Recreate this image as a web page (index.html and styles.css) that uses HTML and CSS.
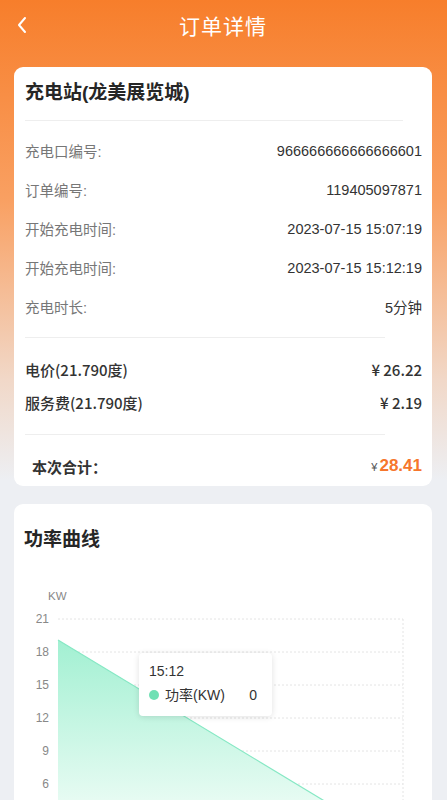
FILE: index.html
```html
<!DOCTYPE html>
<html lang="zh-CN">
<head>
    <meta charset="UTF-8">
    <meta name="viewport" content="width=device-width, initial-scale=1.0">
    <title>订单详情</title>
    <link rel="stylesheet" href="styles.css">
</head>
<body>
    <div class="page">
        <header class="nav-bar">
            <span class="back">
                <svg width="12" height="18" viewBox="0 0 12 18"><path d="M9 2 L3 9 L9 16" fill="none" stroke="#fff" stroke-width="2" stroke-linecap="round" stroke-linejoin="round"/></svg>
            </span>
            <h1 class="nav-title">订单详情</h1>
        </header>

        <section class="card order-card">
            <h2 class="card-title">充电站(龙美展览城)</h2>
            <div class="divider"></div>
            <div class="info-list">
                <div class="info-row"><span class="label">充电口编号:</span><span class="value">966666666666666601</span></div>
                <div class="info-row"><span class="label">订单编号:</span><span class="value">119405097871</span></div>
                <div class="info-row"><span class="label">开始充电时间:</span><span class="value">2023-07-15 15:07:19</span></div>
                <div class="info-row"><span class="label">开始充电时间:</span><span class="value">2023-07-15 15:12:19</span></div>
                <div class="info-row"><span class="label">充电时长:</span><span class="value">5分钟</span></div>
            </div>
            <div class="divider short"></div>
            <div class="price-list">
                <div class="price-row"><span>电价(21.790度)</span><span>¥ 26.22</span></div>
                <div class="price-row"><span>服务费(21.790度)</span><span>¥ 2.19</span></div>
            </div>
            <div class="divider short"></div>
            <div class="total-row">
                <span class="total-label">本次合计：</span>
                <span class="total-value"><small>¥</small>28.41</span>
            </div>
        </section>

        <section class="card chart-card">
            <h2 class="card-title">功率曲线</h2>
            <div class="chart">
                <svg class="chart-svg" width="418" height="230" viewBox="0 0 418 230">
                    <defs>
                        <linearGradient id="area-fill" x1="0" y1="0" x2="0" y2="1">
                            <stop offset="0" stop-color="#a2f0d2"/>
                            <stop offset="1" stop-color="#ecfcf5"/>
                        </linearGradient>
                    </defs>
                    <text x="34" y="16" class="axis-unit" text-anchor="start">KW</text>
                    <g class="grid">
                        <line x1="44" y1="35" x2="389" y2="35"/>
                        <line x1="44" y1="68" x2="389" y2="68"/>
                        <line x1="44" y1="101" x2="389" y2="101"/>
                        <line x1="44" y1="134" x2="389" y2="134"/>
                        <line x1="44" y1="167" x2="389" y2="167"/>
                        <line x1="44" y1="200" x2="389" y2="200"/>
                        <line x1="389" y1="35" x2="389" y2="230"/>
                    </g>
                    <g class="axis-labels">
                        <text x="35" y="39">21</text>
                        <text x="35" y="72">18</text>
                        <text x="35" y="105">15</text>
                        <text x="35" y="138">12</text>
                        <text x="35" y="171">9</text>
                        <text x="35" y="204">6</text>
                    </g>
                    <polygon points="44,56 332,230 44,230" fill="url(#area-fill)"/>
                    <line x1="44" y1="56" x2="332" y2="230" stroke="#86e8c4" stroke-width="1.2"/>
                </svg>
                <div class="tooltip">
                    <div class="tip-time">15:12</div>
                    <div class="tip-row">
                        <span class="tip-dot"></span>
                        <span class="tip-name">功率(KW)</span>
                        <span class="tip-val">0</span>
                    </div>
                </div>
            </div>
        </section>
    </div>
</body>
</html>
```

FILE: styles.css
```css
body {
    margin: 0;
    padding: 0;
    font-family: "Liberation Sans", "Noto Sans CJK SC", sans-serif;
    background-color: #edeff3;
    overflow: hidden;
}

.page {
    min-height: 800px;
    background: linear-gradient(180deg, #f77e2b 0, #f9a062 200px, #f1d8c8 380px, #edeff3 480px);
    padding: 0 15px 0 14px;
    box-sizing: border-box;
}

.nav-bar {
    height: 50px;
    display: flex;
    align-items: center;
    justify-content: center;
    position: relative;
}

.back {
    position: absolute;
    left: 2px;
    top: 16px;
}

.nav-title {
    margin: 0;
    font-size: 21px;
    font-weight: normal;
    color: #fff;
    letter-spacing: 1px;
}

.card {
    background-color: #fff;
    border-radius: 9px;
    padding: 0 10px 0 11px;
}

.order-card {
    margin-top: 17px;
    padding-top: 14px;
    padding-bottom: 8px;
}

.card-title {
    margin: 0;
    font-size: 19px;
    line-height: 24px;
    font-weight: bold;
    color: #262626;
}

.divider {
    height: 1px;
    background-color: #eeeeee;
    margin: 15px 19px 0 0;
}

.divider.short {
    margin: 0 37px 0 0;
}

.info-list {
    padding: 10px 0 11px;
}

.info-row {
    height: 39px;
    display: flex;
    align-items: center;
    justify-content: space-between;
    font-size: 14.5px;
}

.label {
    color: #777;
}

.value {
    color: #333;
    font-size: 14.5px;
}

.price-list {
    padding: 15px 0 15px;
}

.price-row {
    height: 33px;
    display: flex;
    align-items: center;
    justify-content: space-between;
    font-family: "Noto Sans CJK SC", sans-serif;
    font-size: 15px;
    color: #333;
    font-weight: 500;
}

.total-row {
    display: flex;
    align-items: center;
    justify-content: space-between;
    padding: 19px 0 0 7px;
    height: 24px;
}

.total-label {
    font-size: 15px;
    font-weight: bold;
    color: #333;
}

.total-value {
    font-size: 17px;
    font-weight: bold;
    color: #f6762c;
}

.total-value small {
    font-size: 11px;
    font-weight: normal;
    color: #555;
    margin-right: 2px;
}

.chart-card {
    margin-top: 18px;
    padding: 24px 0 20px;
}

.chart-card .card-title {
    padding-left: 10px;
}

.chart {
    position: relative;
    margin-top: 32px;
}

.chart-svg {
    display: block;
}

.grid line {
    stroke: #e4e4e4;
    stroke-width: 1;
    stroke-dasharray: 2 2;
}

.axis-labels text {
    font-size: 12px;
    fill: #888;
    text-anchor: end;
}

.axis-unit {
    font-size: 11.5px;
    fill: #888;
}

.tooltip {
    position: absolute;
    left: 125px;
    top: 69px;
    width: 133px;
    height: 63px;
    box-sizing: border-box;
    padding: 9px 10px 0 10px;
    background-color: #fff;
    border-radius: 4px;
    box-shadow: 0 1px 6px rgba(0, 0, 0, 0.12);
    color: #333;
}

.tip-time {
    font-size: 14px;
    line-height: 18px;
}

.tip-row {
    display: flex;
    align-items: center;
    margin-top: 6px;
    font-size: 14px;
    line-height: 18px;
}

.tip-dot {
    width: 10px;
    height: 10px;
    border-radius: 50%;
    background-color: #6fe0b4;
    margin-right: 6px;
}

.tip-name {
    flex: 1;
}

.tip-val {
    margin-right: 5px;
}
```
